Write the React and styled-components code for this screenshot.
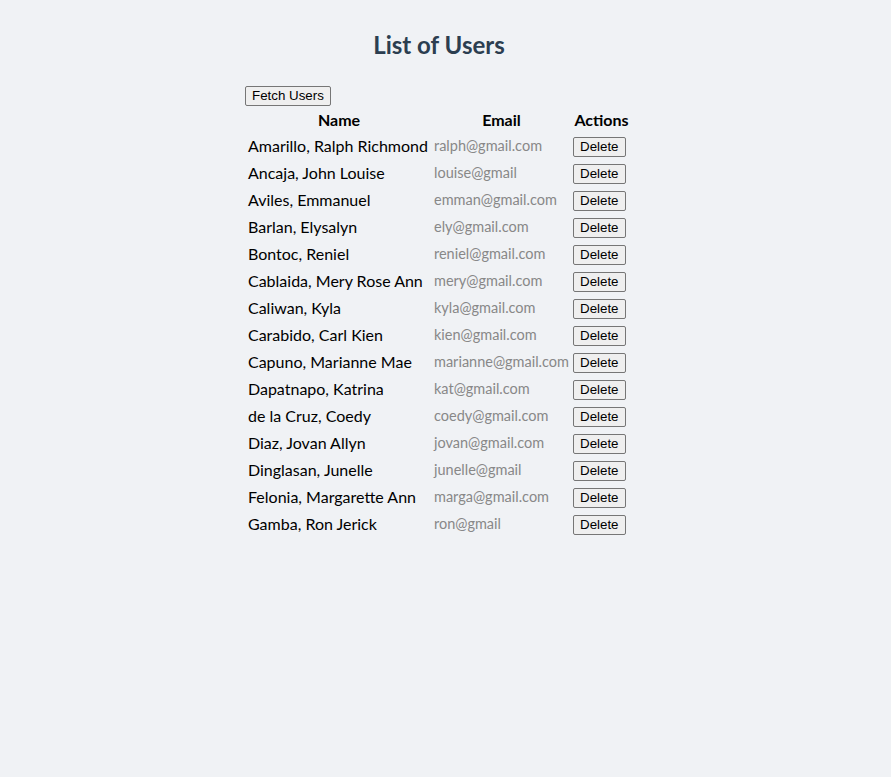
import React from "react";
import styled, { createGlobalStyle } from "styled-components";

const users = [
  { name: "Amarillo, Ralph Richmond", email: "ralph@gmail.com" },
  { name: "Ancaja, John Louise", email: "louise@gmail" },
  { name: "Aviles, Emmanuel", email: "emman@gmail.com" },
  { name: "Barlan, Elysalyn", email: "ely@gmail.com" },
  { name: "Bontoc, Reniel", email: "reniel@gmail.com" },
  { name: "Cablaida, Mery Rose Ann", email: "mery@gmail.com" },
  { name: "Caliwan, Kyla", email: "kyla@gmail.com" },
  { name: "Carabido, Carl Kien", email: "kien@gmail.com" },
  { name: "Capuno, Marianne Mae", email: "marianne@gmail.com" },
  { name: "Dapatnapo, Katrina", email: "kat@gmail.com" },
  { name: "de la Cruz, Coedy", email: "coedy@gmail.com" },
  { name: "Diaz, Jovan Allyn", email: "jovan@gmail.com" },
  { name: "Dinglasan, Junelle", email: "junelle@gmail" },
  { name: "Felonia, Margarette Ann", email: "marga@gmail.com" },
  { name: "Gamba, Ron Jerick", email: "ron@gmail" },
];

const GlobalStyle = createGlobalStyle`
  body {
    margin: 8px;
    background: #f0f2f5;
    font-family: Lato, "Noto Sans", sans-serif;
  }
`;

const Page = styled.div`
  width: 862px;
  text-align: center;
`;

const Title = styled.h2`
  margin: 0;
  padding-top: 21px;
  height: 55px;
  font-size: 24px;
  font-weight: 700;
  color: #2c3e50;
  line-height: 32px;
`;

const Content = styled.div`
  display: inline-block;
  text-align: left;
`;

const Toolbar = styled.div`
  height: 21px;
`;

const Button = styled.button`
  font-family: "Liberation Sans", Arial, sans-serif;
  font-size: 13.333px;
  color: #000;
  background: #efefef;
  border: 1px solid #767676;
  border-radius: 2px;
  padding: 1px 6px;
  height: 20px;
  line-height: 16px;
  cursor: pointer;
`;

const Table = styled.table`
  border-spacing: 2px;
  table-layout: fixed;
`;

const Head = styled.th`
  width: ${(p) => p.w}px;
  height: 22px;
  padding: 1px;
  font-size: 16px;
  font-weight: 700;
  color: #000;
  text-align: center;
`;

const Cell = styled.td`
  height: 23px;
  padding: 1px;
  white-space: nowrap;
  font-size: ${(p) => (p.muted ? "14.5px" : "16px")};
  color: ${(p) => (p.muted ? "#888" : "#000")};
`;

export default function App() {
  return (
    <>
      <GlobalStyle />
      <Page>
        <Title>List of Users</Title>
        <Content>
          <Toolbar>
            <Button>Fetch Users</Button>
          </Toolbar>
          <Table>
            <thead>
              <tr>
                <Head w={182}>Name</Head>
                <Head w={135}>Email</Head>
                <Head w={57}>Actions</Head>
              </tr>
            </thead>
            <tbody>
              {users.map((u) => (
                <tr key={u.email}>
                  <Cell>{u.name}</Cell>
                  <Cell muted>{u.email}</Cell>
                  <Cell>
                    <Button>Delete</Button>
                  </Cell>
                </tr>
              ))}
            </tbody>
          </Table>
        </Content>
      </Page>
    </>
  );
}
